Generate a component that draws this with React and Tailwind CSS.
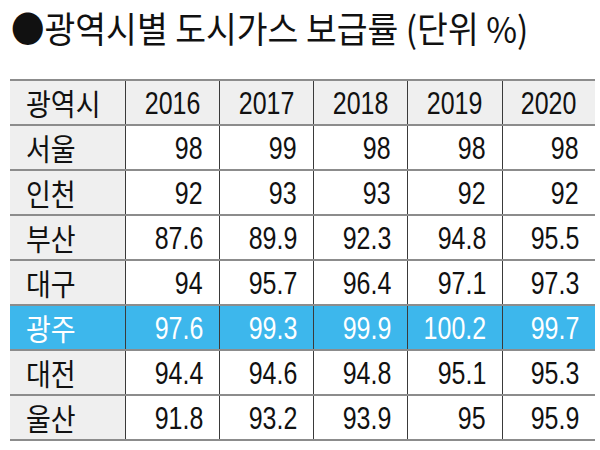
const YEARS = ["2016", "2017", "2018", "2019", "2020"];

const ROWS = [
  ["서울", "98", "99", "98", "98", "98"],
  ["인천", "92", "93", "93", "92", "92"],
  ["부산", "87.6", "89.9", "92.3", "94.8", "95.5"],
  ["대구", "94", "95.7", "96.4", "97.1", "97.3"],
  ["광주", "97.6", "99.3", "99.9", "100.2", "99.7"],
  ["대전", "94.4", "94.6", "94.8", "95.1", "95.3"],
  ["울산", "91.8", "93.2", "93.9", "95", "95.9"],
];

const HIGHLIGHT = "광주";

// no narrow face installed, so squeeze Arial-width digits
const numCls = "inline-block scale-x-[0.78] text-[32px] font-['Liberation_Sans',Arial,sans-serif]";
const krCls = "inline-block origin-left scale-x-[0.9] text-[30px] font-['Noto_Sans_CJK_KR',sans-serif]";

const colW = ["w-[94px]", "w-[94px]", "w-[94px]", "w-[95px]", "w-[93px]"];

export default function App() {
  return (
    <div className="w-[600px] h-[450px] bg-white text-[#111] overflow-hidden">
      {/* title */}
      <div className="pl-[11px] h-[79px] pt-[4px]">
        <span className="inline-block origin-left scale-x-[0.93] whitespace-nowrap text-[36px] leading-[46px] font-['Noto_Sans_CJK_KR',sans-serif]">
          ●광역시별 도시가스 보급률 (단위 %)
        </span>
      </div>

      <div className="ml-[10px] w-[585px] border-t-2 border-[#8c8c8c]">
        {/* header */}
        <div className="flex h-[45px] border-b-2 border-[#8c8c8c] bg-[#efefef]">
          <div className="w-[115px] pl-[16px] flex items-center">
            <span className={krCls}>광역시</span>
          </div>
          {YEARS.map((y, i) => (
            <div
              key={y}
              className={`${colW[i]} border-l border-[#3a3a3a] flex items-center justify-center`}
            >
              <span className={`${numCls} origin-center`}>{y}</span>
            </div>
          ))}
        </div>

        {ROWS.map(([city, ...vals]) => {
          const hi = city === HIGHLIGHT;
          return (
            <div
              key={city}
              className={`flex h-[45px] border-b-2 border-[#8c8c8c] ${hi ? "bg-[#3db7ec] text-white" : ""}`}
            >
              <div className={`w-[115px] pl-[16px] flex items-center ${hi ? "" : "bg-[#efefef]"}`}>
                <span className={krCls}>{city}</span>
              </div>
              {vals.map((v, i) => (
                <div
                  key={i}
                  className={`${colW[i]} border-l border-[#3a3a3a] flex items-center justify-end pr-[16px]`}
                >
                  <span className={`${numCls} origin-right`}>{v}</span>
                </div>
              ))}
            </div>
          );
        })}
      </div>
    </div>
  );
}
